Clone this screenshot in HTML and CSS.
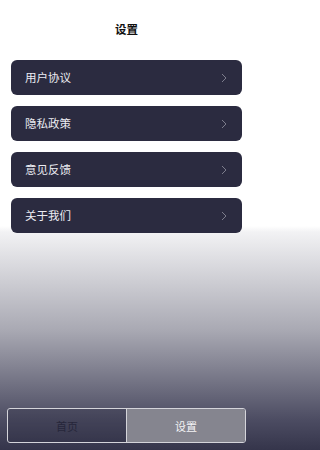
FILE: index.html
```html
<!DOCTYPE html>
<html lang="zh">
<head>
<meta charset="utf-8">
<link rel="stylesheet" href="styles.css">
</head>
<body>
<div class="page">
  <header class="header"><h1 class="title">设置</h1></header>
  <ul class="menu">
    <li class="item"><span class="label">用户协议</span><svg class="chev" viewBox="0 0 6 10" width="6" height="10"><polyline points="1,1 5,5 1,9" fill="none" stroke="#7d7d8c" stroke-width="1"/></svg></li>
    <li class="item"><span class="label">隐私政策</span><svg class="chev" viewBox="0 0 6 10" width="6" height="10"><polyline points="1,1 5,5 1,9" fill="none" stroke="#7d7d8c" stroke-width="1"/></svg></li>
    <li class="item"><span class="label">意见反馈</span><svg class="chev" viewBox="0 0 6 10" width="6" height="10"><polyline points="1,1 5,5 1,9" fill="none" stroke="#7d7d8c" stroke-width="1"/></svg></li>
    <li class="item"><span class="label">关于我们</span><svg class="chev" viewBox="0 0 6 10" width="6" height="10"><polyline points="1,1 5,5 1,9" fill="none" stroke="#7d7d8c" stroke-width="1"/></svg></li>
  </ul>
  <nav class="tabbar">
    <div class="tab">首页</div>
    <div class="tab tab-active">设置</div>
  </nav>
</div>
</body>
</html>
```
FILE: styles.css
```css
html, body {
  margin: 0;
  padding: 0;
}
body {
  font-family: "Noto Sans CJK SC", "Noto Sans", sans-serif;
  background: linear-gradient(to bottom, #ffffff 0, #ffffff 226px, #f2f2f4 232px, #a9a9b3 330px, #4c4c62 420px, #35354b 450px);
  height: 450px;
  overflow: hidden;
}
.page {
  width: 253px;
  height: 450px;
  display: flex;
  flex-direction: column;
}
.header {
  height: 60px;
  display: flex;
  align-items: center;
  justify-content: center;
}
.title {
  margin: 0;
  font-size: 11.5px;
  font-weight: 700;
  color: #111;
  line-height: 1;
}
.menu {
  list-style: none;
  margin: 0;
  padding: 0 11px;
  display: flex;
  flex-direction: column;
  gap: 11px;
}
.item {
  height: 35px;
  background: #2b2b40;
  border-radius: 6px;
  display: flex;
  align-items: center;
  justify-content: space-between;
  padding: 0 15px 0 14px;
}
.label {
  font-size: 11.5px;
  font-weight: 400;
  color: #ececf2;
  line-height: 1;
}
.chev {
  display: block;
}
.tabbar {
  margin: auto 7px 7px;
  height: 33px;
  border: 1px solid #d4d4da;
  border-radius: 3px;
  display: flex;
  overflow: hidden;
}
.tab {
  flex: 1;
  display: flex;
  align-items: center;
  justify-content: center;
  font-size: 11px;
  font-weight: 400;
  color: #26263a;
  background: rgba(40, 40, 60, 0.25);
}
.tab-active {
  border-left: 1px solid #d4d4da;
  background: #85858f;
  color: #f4f4f6;
}
```
